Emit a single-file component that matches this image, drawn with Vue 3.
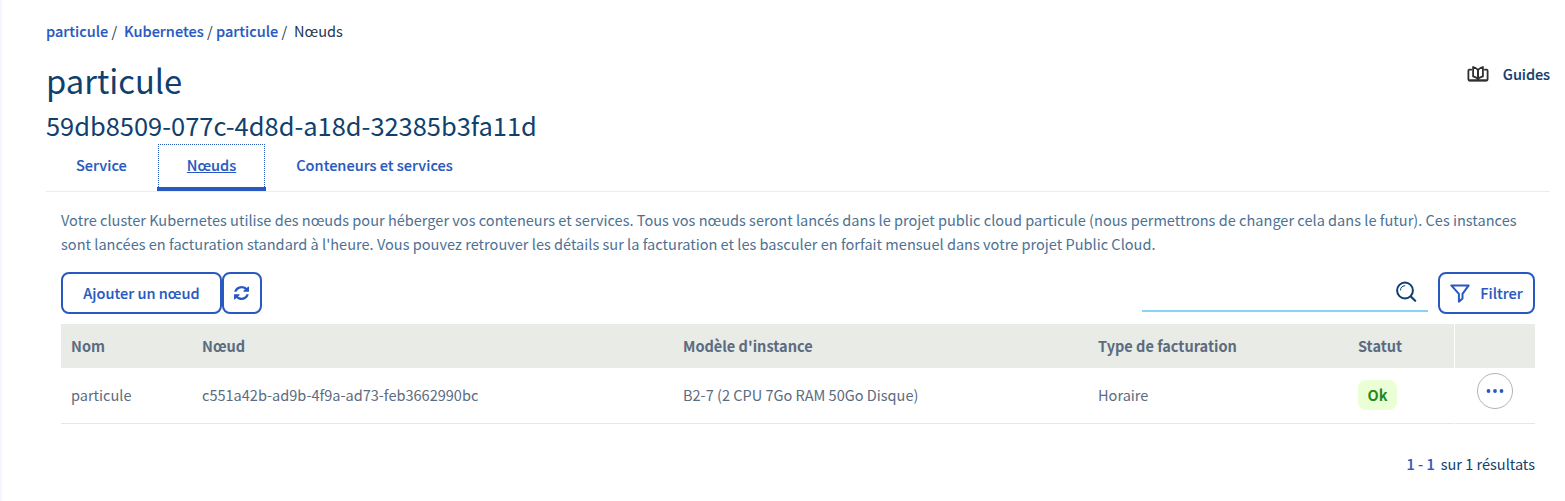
<script setup>
const tabs = [
  { label: 'Service', active: false },
  { label: 'Nœuds', active: true },
  { label: 'Conteneurs et services', active: false },
]
const columns = ['Nom', 'Nœud', "Modèle d'instance", 'Type de facturation', 'Statut', '']
const nodes = [
  {
    name: 'particule',
    id: 'c551a42b-ad9b-4f9a-ad73-feb3662990bc',
    flavor: 'B2-7 (2 CPU 7Go RAM 50Go Disque)',
    billing: 'Horaire',
    status: 'Ok',
  },
]
</script>

<template>
  <main class="page">
    <nav class="breadcrumb">
      <a>particule</a><span class="sep wide">/</span><a>Kubernetes</a><span class="sep">/</span><a>particule</a><span class="sep wide">/</span><span class="current">Nœuds</span>
    </nav>

    <header class="head">
      <div class="titles">
        <h1>particule</h1>
        <h2>59db8509-077c-4d8d-a18d-32385b3fa11d</h2>
      </div>
      <a class="guides">
        <svg width="22" height="18" viewBox="0 0 22 18" fill="none" stroke="#2f2f2f" stroke-width="1.8" stroke-linejoin="round" stroke-linecap="round">
          <path d="M4.200 4.700H2.400q-1 0-1 1v8.600q0 1 1 1h17.200q1 0 1-1V5.700q0-1-1-1h-1.800" />
          <path d="M11 14c-.8-1.400-2.800-1.600-4.900-2.600V2c2.600.8 4.300 1.600 4.900 3.200.6-1.600 2.300-2.400 4.900-3.200v9.400c-2.100 1-4.100 1.200-4.900 2.600z" />
          <path d="M11 5.500V14M2.400 15.400h17.200" stroke-width="2" />
        </svg>
        <span>Guides</span>
      </a>
    </header>

    <nav class="tabs">
      <a v-for="t in tabs" :key="t.label" class="tab" :class="{ active: t.active }">
        <span class="focus"><span class="label">{{ t.label }}</span></span>
      </a>
    </nav>

    <section class="content">
      <p class="intro">
        Votre cluster Kubernetes utilise des nœuds pour héberger vos conteneurs et services. Tous vos nœuds seront lancés dans le projet public cloud particule (nous permettrons de changer cela dans le futur). Ces instances<br />
        sont lancées en facturation standard à l'heure. Vous pouvez retrouver les détails sur la facturation et les basculer en forfait mensuel dans votre projet Public Cloud.
      </p>

      <div class="toolbar">
        <button class="btn add"><span>Ajouter un nœud</span></button>
        <button class="btn refresh" aria-label="Actualiser">
          <svg width="15" height="14" viewBox="0 0 1536 1536" preserveAspectRatio="none" fill="#2859c0">
            <path d="M1511 928q0 5-1 7-64 268-268 434.500T764 1536q-146 0-282.500-55T238 1324l-129 129q-19 19-45 19t-45-19-19-45V960q0-26 19-45t45-19h448q26 0 45 19t19 45-19 45l-137 137q71 66 161 102t187 36q134 0 250-65t186-179q11-17 53-117 8-23 30-23h192q13 0 22.500 9.500t9.500 22.500zm25-800v448q0 26-19 45t-45 19h-448q-26 0-45-19t-19-45 19-45l138-138Q969 256 768 256q-134 0-250 65T332 500q-11 17-53 117-8 23-30 23H50q-13 0-22.500-9.500T18 608v-7q65-268 270-434.500T768 0q146 0 284 55.500T1297 212l130-129q19-19 45-19t45 19 19 45z" />
          </svg>
        </button>
        <div class="search">
          <svg width="22" height="22" viewBox="0 0 22 22" fill="none" stroke="#10406e" stroke-linecap="round">
            <circle cx="10" cy="9.500" r="7.900" stroke-width="2" />
            <path d="M15.800 15.500l4.400 4.200" stroke-width="2.200" />
            <path d="M5.500 9A4.500 4.500 0 0 1 9.800 4.700" stroke-width="1" />
          </svg>
        </div>
        <button class="btn filter">
          <svg width="20" height="19" viewBox="0 0 20 19" fill="none" stroke="#2859c0" stroke-width="2" stroke-linejoin="round">
            <path d="M1.300 1.400h17.400l-6.200 8.400v4.700l-3.600 3.200V9.800z" />
          </svg>
          <span>Filtrer</span>
        </button>
      </div>

      <div class="table">
        <div class="row header">
          <div v-for="c in columns" :key="c">{{ c }}</div>
        </div>
        <div v-for="n in nodes" :key="n.id" class="row body">
          <div>{{ n.name }}</div>
          <div>{{ n.id }}</div>
          <div>{{ n.flavor }}</div>
          <div>{{ n.billing }}</div>
          <div><span class="badge">{{ n.status }}</span></div>
          <div class="actions">
            <button class="more" aria-label="Actions">
              <svg width="18" height="4" viewBox="0 0 18 4" fill="#2859c0">
                <circle cx="2.500" cy="2" r="1.900" /><circle cx="9" cy="2" r="1.900" /><circle cx="15.500" cy="2" r="1.900" />
              </svg>
            </button>
          </div>
        </div>
      </div>

      <footer class="pager"><b>1 - 1</b><span>sur 1 résultats</span></footer>
    </section>
  </main>
</template>

<style>
html,
body {
  background: #fff;
  overflow: hidden;
}
</style>

<style scoped>
.page {
  box-sizing: border-box;
  width: 1565px;
  height: 501px;
  padding: 19px 15px 0 44px;
  border-left: 2px solid #f5f6fd;
  font-family: "Noto Sans CJK SC", "Noto Sans", sans-serif;
  font-size: 14.545px;
  line-height: 24px;
  color: #10406e;
  white-space: nowrap;
}
a,
b,
button {
  font-weight: 500;
  color: #2859c0;
  -webkit-text-stroke: 0.12px currentColor;
}
.breadcrumb {
  display: flex;
  height: 24px;
}
.sep,
.current {
  color: #22364f;
}
.sep {
  margin: 0 3.300px;
}
.sep.wide {
  margin-right: 6.800px;
}
.head {
  display: flex;
  justify-content: space-between;
  height: 101px;
}
h1,
h2 {
  margin: 0;
  font-weight: 400;
}
h1 {
  margin-top: 17px;
  font-size: 32.730px;
  line-height: 40px;
}
h2 {
  margin-top: 8px;
  font-size: 25.450px;
  line-height: 34px;
}
.guides {
  display: flex;
  align-items: center;
  height: 24px;
  margin-top: 19px;
  color: #10406e;
  letter-spacing: -0.1px;
}
.guides svg {
  margin-right: 14px;
}
.tabs {
  display: flex;
  height: 47px;
  border-bottom: 1px solid #e4eff7;
}
.tab {
  box-sizing: border-box;
  height: 47px;
  padding: 0 1px;
}
.focus {
  box-sizing: border-box;
  display: block;
  height: 43px;
  padding: 8px 28px 0;
  border: 1px dotted transparent;
  border-bottom: 0;
}
.active {
  border-bottom: 4px solid #2859c0;
}
.active .focus {
  border-color: #2859c0;
}
.active .label {
  text-decoration: underline;
}
.content {
  padding: 0 15px;
}
.intro {
  margin: 16px 0;
  color: #4d7193;
  letter-spacing: 0.014px;
}
.toolbar {
  display: flex;
  height: 42px;
}
.btn {
  box-sizing: border-box;
  display: flex;
  align-items: center;
  justify-content: center;
  height: 42px;
  padding: 0;
  border: 2px solid #2859c0;
  border-radius: 8px;
  background: #fff;
  font-family: inherit;
  font-size: 14.545px;
  line-height: 24px;
}
.add {
  width: 161px;
}
.refresh {
  width: 40px;
  padding-right: 1px;
}
.filter {
  width: 97px;
  margin-left: 10px;
}
.filter svg {
  margin-right: 10px;
}
.search {
  box-sizing: border-box;
  width: 286px;
  height: 40px;
  margin-left: auto;
  padding: 9px 11px 0 0;
  border-bottom: 2px solid #85d3f5;
}
.search svg {
  display: block;
  margin-left: auto;
}
.table {
  margin-top: 10px;
  color: #5b6b80;
}
.row {
  display: grid;
  grid-template-columns: 131px 481px 415px 260px 106px 80px;
}
.row > div {
  box-sizing: border-box;
  padding-left: 10px;
}
.row > div:nth-child(6) {
  margin-left: 1px;
  width: 80px;
}
.header > div {
  height: 44px;
  padding-top: 10px;
  background: #e8ebe6;
  font-weight: 700;
}
.body > div {
  height: 56px;
  padding-top: 15px;
  border-bottom: 1px solid #e6e6e6;
}
.badge {
  display: block;
  width: 39px;
  height: 30px;
  margin-top: -3px;
  border-radius: 8px;
  background: #eaffd5;
  color: #1f8a24;
  font-weight: 700;
  line-height: 30px;
  text-align: center;
}
.body > .actions {
  padding: 5px 0 0 22px;
}
.more {
  box-sizing: border-box;
  display: flex;
  align-items: center;
  justify-content: center;
  width: 36px;
  height: 36px;
  padding: 0;
  border: 1px solid #b3b3b3;
  border-radius: 50%;
  background: #fff;
}
.pager {
  display: flex;
  justify-content: flex-end;
  margin-top: 28px;
}
.pager b {
  margin-right: 6px;
}
</style>
